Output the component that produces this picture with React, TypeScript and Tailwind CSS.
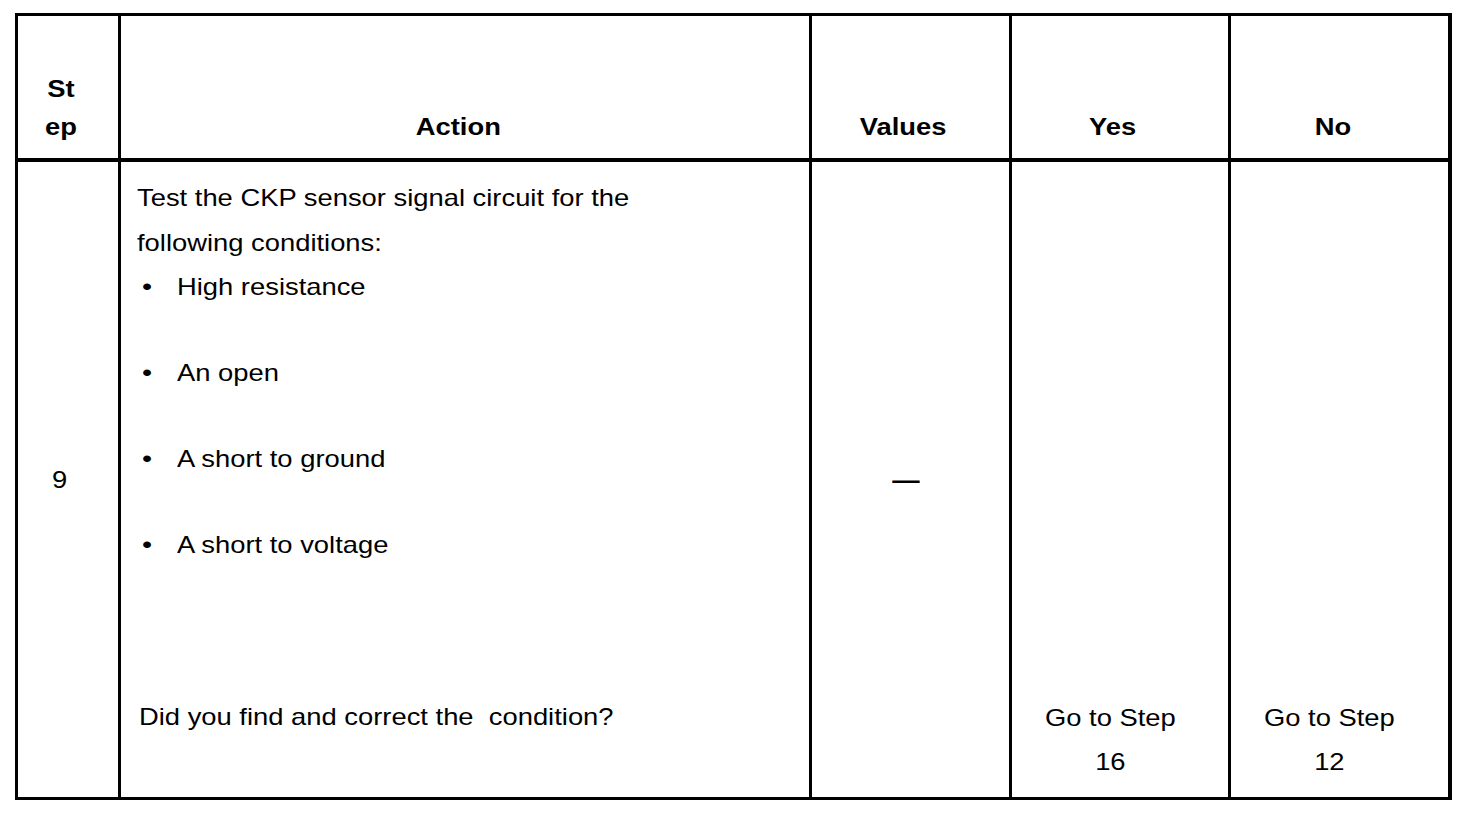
const font = { fontFamily: '"Liberation Sans", Arial, sans-serif' }

// the source scan is stretched sideways, so text is widened a bit
function HeadCell({ children }: { children: React.ReactNode }) {
  return (
    <div className="bg-white flex items-end justify-center pl-[4px] pr-[18px] pb-[12px] text-center text-[24px] leading-[38px] font-bold text-black">
      <div className="scale-x-[1.14] origin-center">{children}</div>
    </div>
  )
}

function Line({ text, className = '' }: { text: string; className?: string }) {
  return <div className={`scale-x-[1.14] origin-left whitespace-pre ${className}`}>{text}</div>
}

function Bullet({ text, className = '' }: { text: string; className?: string }) {
  return (
    <div className={`flex ${className}`}>
      <span className="w-[40px] shrink-0 pl-[5px]">
        <span className="inline-block scale-x-[1.2] origin-left">•</span>
      </span>
      <Line text={text} />
    </div>
  )
}

function GoTo({ step }: { step: string }) {
  return (
    <div className="bg-white flex items-end justify-center pl-[4px] pr-[24px] pb-[13px] text-center text-[24px] leading-[44px] text-black">
      <div className="scale-x-[1.14] origin-center">
        Go to Step
        <br />
        {step}
      </div>
    </div>
  )
}

export default function App() {
  return (
    <div className="w-[1472px] h-[820px] bg-white pl-[15px] pt-[13px]" style={font}>
      <div className="inline-grid grid-cols-[100px_688px_197px_216px_217px] grid-rows-[142px_635px] gap-x-[3px] gap-y-[4px] bg-black pl-[3px] pr-[4px] pt-[3px] pb-[3px]">
        <HeadCell>
          St
          <br />
          ep
        </HeadCell>
        <HeadCell>Action</HeadCell>
        <HeadCell>Values</HeadCell>
        <HeadCell>Yes</HeadCell>
        <HeadCell>No</HeadCell>

        {/* body row */}
        <div className="bg-white flex items-center justify-center pl-[4px] pr-[20px] text-[24px] leading-[44px] text-black">
          <div className="scale-x-[1.14]">9</div>
        </div>
        <div className="bg-white pl-[16px] pt-[14px] text-[24px] leading-[44px] text-black">
          <Line text="Test the CKP sensor signal circuit for the" />
          <Line text="following conditions:" className="mt-[1px]" />
          <Bullet text="High resistance" />
          <Bullet text="An open" className="mt-[42px]" />
          <Bullet text="A short to ground" className="mt-[42px]" />
          <Bullet text="A short to voltage" className="mt-[42px]" />
          <Line text="Did you find and correct the  condition?" className="mt-[128px] ml-[2px]" />
        </div>
        <div className="bg-white flex items-center justify-center pl-[4px] pr-[14px] text-[24px] leading-[44px] font-bold text-black">
          <div className="scale-x-[1.14]">—</div>
        </div>
        <GoTo step="16" />
        <GoTo step="12" />
      </div>
    </div>
  )
}
